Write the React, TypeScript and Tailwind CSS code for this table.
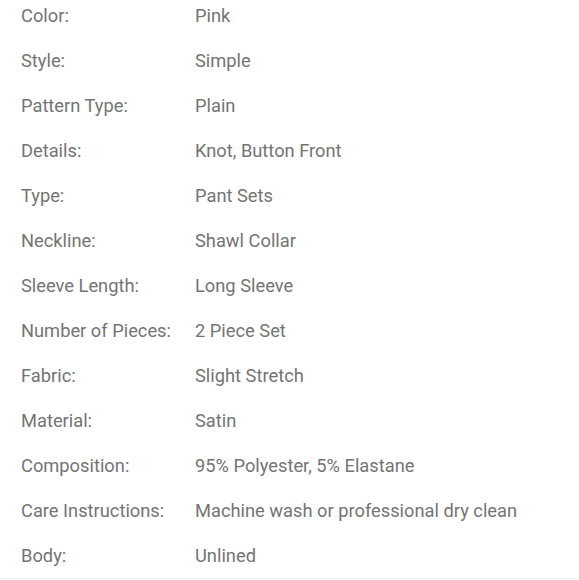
const specs: [string, string][] = [
  ['Color:', 'Pink'],
  ['Style:', 'Simple'],
  ['Pattern Type:', 'Plain'],
  ['Details:', 'Knot, Button Front'],
  ['Type:', 'Pant Sets'],
  ['Neckline:', 'Shawl Collar'],
  ['Sleeve Length:', 'Long Sleeve'],
  ['Number of Pieces:', '2 Piece Set'],
  ['Fabric:', 'Slight Stretch'],
  ['Material:', 'Satin'],
  ['Composition:', '95% Polyester, 5% Elastane'],
  ['Care Instructions:', 'Machine wash or professional dry clean'],
  ['Body:', 'Unlined'],
];

export default function App() {
  return (
    <div className="h-[580px] w-[579px] overflow-hidden bg-white" style={{ fontFamily: 'Roboto, sans-serif' }}>
      <div className="mt-[-7px] border-b border-[#eeeeee]">
        {specs.map(([label, value]) => (
          <div key={label} className="flex h-[45px] items-center text-[18.3px] leading-[45px] text-[#747474]">
            <div className="w-[195px] shrink-0 pl-[21px]">{label}</div>
            <div>{value}</div>
          </div>
        ))}
      </div>
    </div>
  );
}
